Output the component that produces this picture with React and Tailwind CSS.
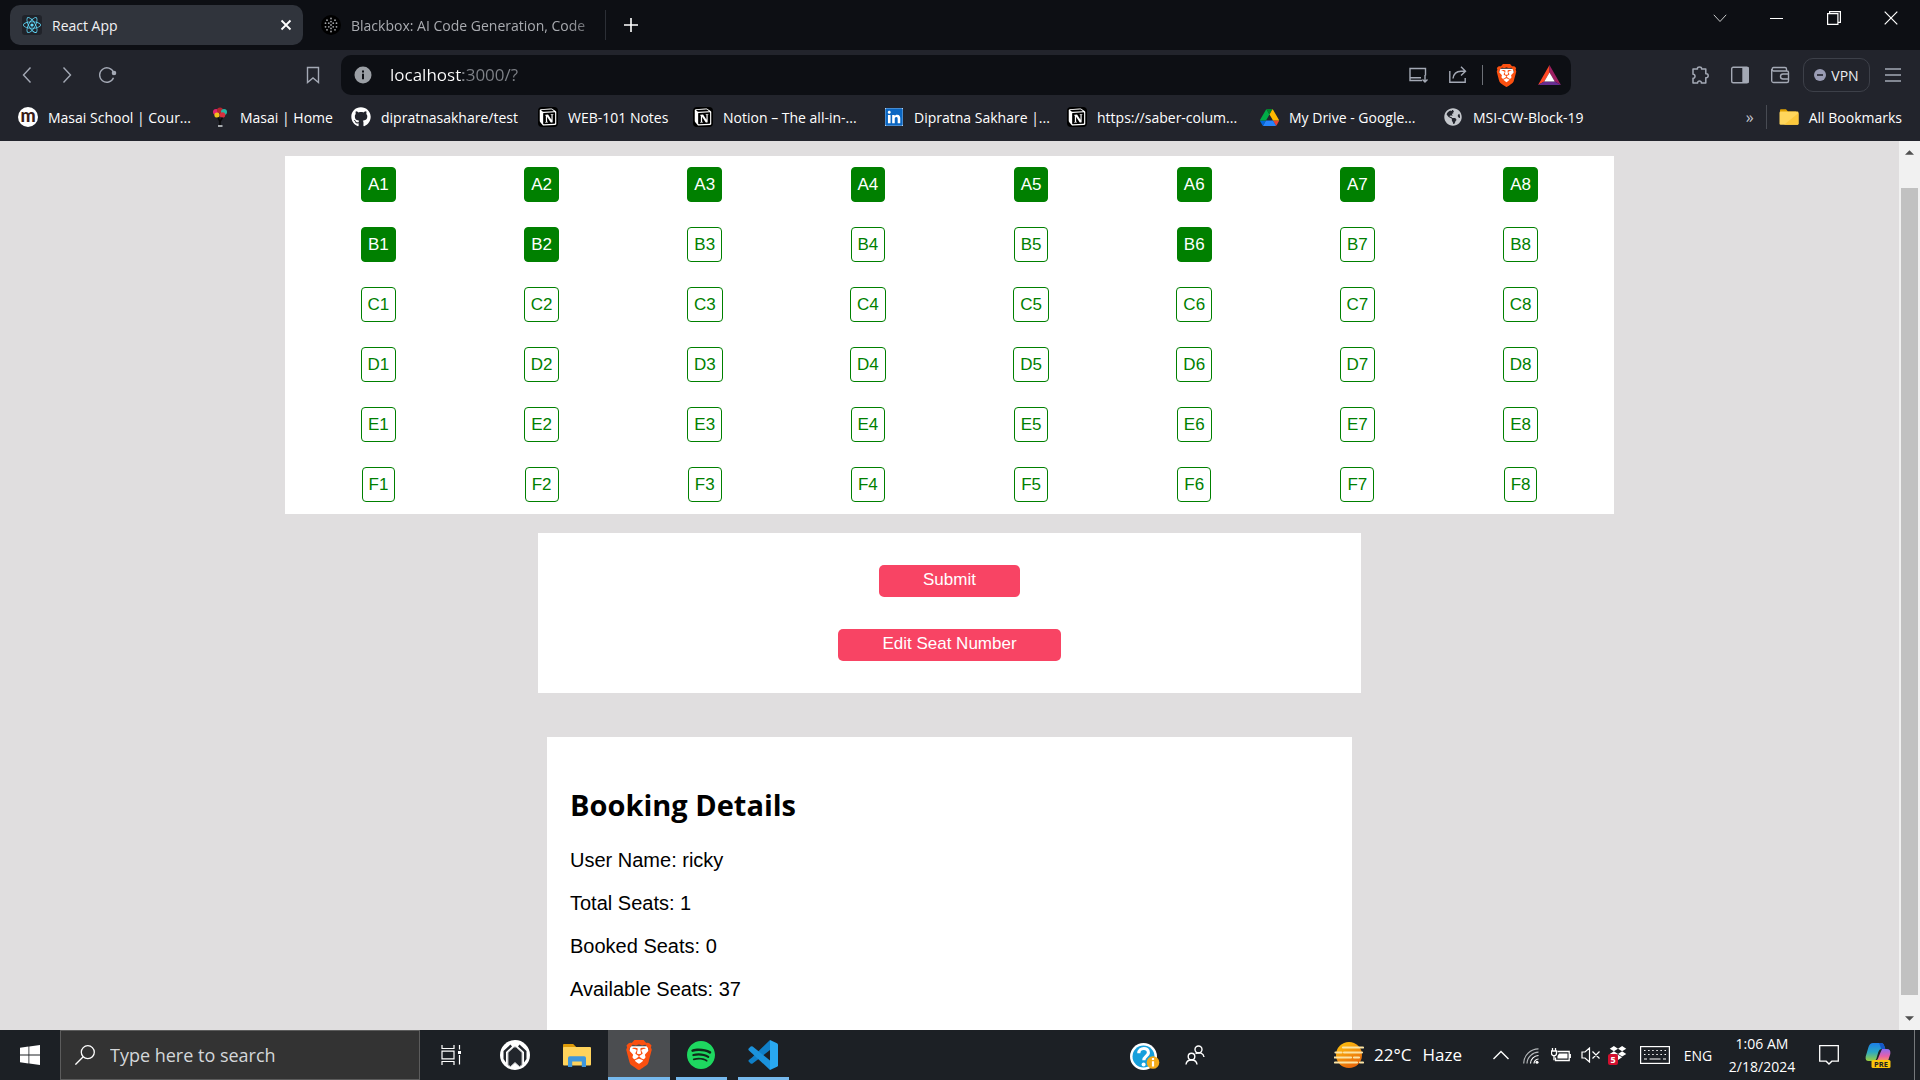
import React, { useState } from "react";
import { SiBrave, SiSpotify } from "react-icons/si";
import { FaGithub, FaLinkedin, FaDropbox, FaReact, FaGlobeAmericas } from "react-icons/fa";
import { RiNotionFill } from "react-icons/ri";

const ROWS = ["A", "B", "C", "D", "E", "F"];
const COLS = [1, 2, 3, 4, 5, 6, 7, 8];
const INITIAL_SELECTED = ["A1", "A2", "A3", "A4", "A5", "A6", "A7", "A8", "B1", "B2", "B6"];

function BraveLion({ className }) {
  return (
    <span className={`grid place-items-center ${className}`}>
      <svg viewBox="0 0 24 24" className="col-start-1 row-start-1 h-full w-full">
        <path d="M5 5h14l1 6-3 7-5 4-5-4-3-7z" fill="#fff" />
      </svg>
      <SiBrave className="col-start-1 row-start-1 h-full w-full text-[#fb5010]" />
    </span>
  );
}

function MasaiIcon() {
  return (
    <span className="flex h-5 w-5 items-center justify-center rounded-full bg-white pb-1 font-['Lato',sans-serif] text-[18px] font-black leading-none text-[#3a1d1a]">
      m
    </span>
  );
}

function BalloonIcon() {
  return (
    <svg viewBox="0 0 20 20" className="h-5 w-5">
      <circle cx="6" cy="5" r="3" fill="#e0246e" />
      <circle cx="10" cy="3.5" r="3" fill="#b3262e" />
      <circle cx="14" cy="5" r="3" fill="#26b8a5" />
      <circle cx="7" cy="8" r="2.6" fill="#f2c21b" />
      <circle cx="12.5" cy="8" r="2.8" fill="#d8303e" />
      <path d="M8 10.5l2 4 2.5-4M10 14v5" stroke="#0b0b0d" strokeWidth="1.6" fill="none" />
      <path d="M8 19h4.5" stroke="#c9ccd0" strokeWidth="1.6" />
    </svg>
  );
}

function NotionIcon() {
  return (
    <span className="flex h-5 w-5 items-center justify-center rounded-[4px] bg-black">
      <RiNotionFill className="h-[22px] w-[22px] shrink-0 text-white" />
    </span>
  );
}

function DriveIcon() {
  return (
    <svg viewBox="0 0 87.3 78" className="h-[17px] w-[19px]">
      <path d="m6.6 66.85 3.85 6.65c.8 1.4 1.95 2.5 3.3 3.3l13.75-23.8h-27.5c0 1.55.4 3.1 1.2 4.5z" fill="#0066da" />
      <path d="m43.65 25-13.75-23.8c-1.35.8-2.5 1.9-3.3 3.3l-25.4 44a9.06 9.06 0 0 0 -1.2 4.5h27.5z" fill="#00ac47" />
      <path d="m73.55 76.8c1.35-.8 2.5-1.9 3.3-3.3l1.6-2.75 7.65-13.25c.8-1.4 1.2-2.95 1.2-4.5h-27.502l5.852 11.5z" fill="#ea4335" />
      <path d="m43.65 25 13.75-23.8c-1.35-.8-2.9-1.2-4.5-1.2h-18.5c-1.6 0-3.15.45-4.5 1.2z" fill="#00832d" />
      <path d="m59.8 53h-32.3l-13.75 23.8c1.35.8 2.9 1.2 4.5 1.2h50.8c1.6 0 3.15-.45 4.5-1.2z" fill="#2684fc" />
      <path d="m73.4 26.5-12.7-22c-.8-1.4-1.95-2.5-3.3-3.3l-13.75 23.8 16.15 28h27.45c0-1.55-.4-3.1-1.2-4.5z" fill="#ffba00" />
    </svg>
  );
}

function BookmarkFolder() {
  return (
    <svg viewBox="0 0 20 16" className="h-4 w-5">
      <path d="M1 1.5C1 .7 1.5.3 2 .3h5L9 2.5h8v5H1z" fill="#e0a100" />
      <rect x="0.5" y="2.5" width="19" height="13.2" rx="1.2" fill="#ffd65c" />
      <path d="M19.5 4v10.500a1.200 1.200 0 0 1-1.200 1.200H5z" fill="#fcc83c" />
    </svg>
  );
}

const BOOKMARKS = [
  { icon: <MasaiIcon />, label: "Masai School | Cour..." },
  { icon: <BalloonIcon />, label: "Masai | Home" },
  { icon: <FaGithub className="h-5 w-5 text-white" />, label: "dipratnasakhare/test" },
  { icon: <NotionIcon />, label: "WEB-101 Notes" },
  { icon: <NotionIcon />, label: "Notion – The all-in-..." },
  {
    icon: (
      <span className="flex h-[18px] w-[18px] items-center justify-center bg-white">
        <FaLinkedin className="h-5 w-[18px] text-[#0a66c2]" />
      </span>
    ),
    label: "Dipratna Sakhare |...",
  },
  { icon: <NotionIcon />, label: "https://saber-colum..." },
  { icon: <DriveIcon />, label: "My Drive - Google..." },
  { icon: <FaGlobeAmericas className="h-[18px] w-[18px] text-[#c4c7cc]" />, label: "MSI-CW-Block-19" },
];

function TabStrip() {
  return (
    <div className="flex h-[50px] shrink-0 bg-[#0d0f14] text-[14px]">
      <div className="ml-[10px] mt-[5px] flex h-10 w-[293px] items-center rounded-[10px] bg-[#30343c] pl-3 pr-[7px] text-[#f0f1f3]">
        <span className="flex h-5 w-5 items-center justify-center rounded-[3px] bg-[#20232a]">
          <FaReact className="h-[18px] w-[18px] text-[#61dafb]" />
        </span>
        <span className="ml-[10px] flex-1">React App</span>
        <button aria-label="Close tab" className="flex h-5 w-5 items-center justify-center">
          <svg viewBox="0 0 12 12" className="h-3 w-3">
            <path d="M1.500 1.500l9 9M10.500 1.500l-9 9" stroke="#fff" strokeWidth="1.800" />
          </svg>
        </button>
      </div>
      <div className="ml-[18px] flex h-[50px] w-[284px] items-center text-[#a9abb0]">
        <svg viewBox="0 0 20 20" className="h-5 w-5 shrink-0">
          <circle cx="10" cy="10" r="10" fill="#000" />
          {[
            [10, 3.5], [6, 5.2], [14, 5.2], [10, 6.6], [4.5, 8.2], [7.8, 8.2], [12.2, 8.2], [15.5, 8.2],
            [10, 10], [4.5, 11.8], [7.8, 11.8], [12.2, 11.8], [15.5, 11.8], [10, 13.4], [6, 14.8], [14, 14.8], [10, 16.5],
          ].map(([x, y]) => (
            <circle key={`${x}-${y}`} cx={x} cy={y} r="0.9" fill="#a0a2a6" />
          ))}
        </svg>
        <span className="ml-[10px] whitespace-nowrap [mask-image:linear-gradient(to_right,#000_92%,rgba(0,0,0,0.6))]">
          Blackbox: AI Code Generation, Code
        </span>
      </div>
      <div className="my-[10px] w-px bg-[#2c2f36]" />
      <button aria-label="New tab" className="flex w-[50px] items-center justify-center">
        <svg viewBox="0 0 14 14" className="h-[14px] w-[14px]">
          <path d="M7 0v14M0 7h14" stroke="#fff" strokeWidth="1.600" />
        </svg>
      </button>
      <div className="ml-auto mr-px flex h-9">
        <button aria-label="Search tabs" className="flex w-[57px] items-center justify-center">
          <svg viewBox="0 0 14 14" className="h-[14px] w-[14px]">
            <path d="M.8 3.800L7 10.500l6.200-6.700" stroke="#c9cacc" fill="none" />
          </svg>
        </button>
        <button aria-label="Minimize" className="flex w-[57px] items-center justify-center">
          <span className="h-px w-[13px] bg-white" />
        </button>
        <button aria-label="Restore" className="flex w-[57px] items-center justify-center">
          <svg viewBox="0 0 14 14" className="h-[14px] w-[14px]">
            <path d="M.6 2.600h10.300v10.800H.6zM2.600 2.500V.6h10.800v10.800h-2" stroke="#fff" strokeWidth="1.200" fill="none" />
          </svg>
        </button>
        <button aria-label="Close" className="flex w-[57px] items-center justify-center">
          <svg viewBox="0 0 14 14" className="h-[14px] w-[14px]">
            <path d="M.7.7l12.600 12.600M13.300.7L.7 13.300" stroke="#fff" strokeWidth="1.200" />
          </svg>
        </button>
      </div>
    </div>
  );
}

function ToolButton({ label, children }) {
  return (
    <button aria-label={label} className="flex h-10 w-10 shrink-0 items-center justify-center">
      <svg viewBox="0 0 20 20" className="h-5 w-5" fill="none" stroke="#a4a9b5" strokeWidth="1.400">
        {children}
      </svg>
    </button>
  );
}

function Toolbar() {
  return (
    <div className="flex h-[50px] shrink-0 items-center bg-[#22242c]">
      <div className="flex w-[341px] items-center pl-[7px] pr-2">
        <ToolButton label="Back"><path d="M13.500 2.500L6.500 10l7 7.500" /></ToolButton>
        <ToolButton label="Forward"><path d="M6.500 2.500l7 7.500-7 7.500" /></ToolButton>
        <ToolButton label="Reload">
          <path d="M16.500 12.800A7.200 7.200 0 1 1 16.600 7.500" />
          <circle cx="17" cy="8" r="1.600" fill="#a4a9b5" />
        </ToolButton>
        <div className="ml-auto">
          <ToolButton label="Bookmark page"><path d="M4.500 2.500h11v15L10 13l-5.500 4.500z" /></ToolButton>
        </div>
      </div>
      <div className="flex h-10 flex-1 items-center rounded-[10px] bg-[#0d0f14] pl-[13px] pr-[2px]">
        <svg viewBox="0 0 18 18" className="h-[18px] w-[18px]">
          <circle cx="9" cy="9" r="8.500" fill="#9b9fa5" />
          <path d="M9 7.800v5.400M9 4.600v1.800" stroke="#0d0f14" strokeWidth="2" />
        </svg>
        <input
          type="text"
          aria-label="Address"
          defaultValue="localhost:3000/?"
          className="ml-[18px] w-0 flex-1 bg-[linear-gradient(to_right,#fff_73px,#7f8288_73px)] bg-clip-text text-[17px] text-transparent outline-none"
        />
        <ToolButton label="Install app">
          <path d="M14 15.500H2V3.500h15.500v7M2 12.800h11M17 10v7M14.500 14.500L17 17l2.500-2.500" />
        </ToolButton>
        <ToolButton label="Share">
          <path d="M1.800 6v11.200h15.400V13M5 13.500c.6-4.500 3.500-7.300 8-7.300h4M13 1.800l4.500 4.400-4.500 4.400" />
        </ToolButton>
        <div className="ml-1 h-5 w-px bg-[#6d7077]" />
        <button aria-label="Brave Shields" className="flex h-10 w-[46px] items-center justify-center">
          <BraveLion className="h-[23px] w-[23px]" />
        </button>
        <button aria-label="Brave Rewards" className="flex h-10 w-10 items-center justify-center">
          <svg viewBox="0 0 24 21" className="h-5 w-[23px]">
            <path d="M12 0L0 21l6.500-3.700L12 8z" fill="#ff4724" />
            <path d="M12 0l12 21-6.500-3.700L12 8z" fill="#9e1f63" />
            <path d="M0 21l6.500-3.700h11L24 21z" fill="#662d91" />
            <path d="M12 8l5.500 9.300h-11z" fill="#fff" />
          </svg>
        </button>
      </div>
      <div className="flex w-[349px] items-center justify-end pr-[7px]">
        <button aria-label="Extensions" className="flex h-10 w-10 items-center justify-center">
          <svg viewBox="0 0 20 20" className="h-5 w-5" fill="none" stroke="#a4a9b5" strokeWidth="1.500" strokeLinejoin="round">
            <path d="M3 4h4.500C6.800 1.200 12.200 1.200 11.500 4h4.300v4.700c3.200-.6 3.200 4.600 0 4V18h-4.500c.6-2.800-4.200-2.800-3.600 0H3v-4.800c2.700.6 2.700-4.500 0-4z" />
          </svg>
        </button>
        <ToolButton label="Sidebar">
          <rect x="1.700" y="2.300" width="16.600" height="15.400" rx="1.500" />
          <path d="M13 3h5v14h-5z" fill="#a4a9b5" />
        </ToolButton>
        <ToolButton label="Wallet">
          <path d="M16.500 6V4a1.500 1.500 0 0 0-1.500-1.500H3.500a1.800 1.800 0 0 0 0 3.500H17a1.500 1.500 0 0 1 1.500 1.500v8.500a1.500 1.500 0 0 1-1.500 1.500H3.500A1.800 1.800 0 0 1 1.700 16V4M18.500 9H13a2.500 2.500 0 0 0 0 5h5.500" />
        </ToolButton>
        <button className="mx-[3px] flex h-[34px] w-[67px] items-center justify-center gap-[5px] rounded-[10px] border border-[#3d4049] text-[14px] text-[#eceef2]">
          <svg viewBox="0 0 12 12" className="h-3 w-3">
            <circle cx="6" cy="6" r="6" fill="#9a9cb4" />
            <path d="M3 6h6" stroke="#22242c" strokeWidth="1.600" />
          </svg>
          VPN
        </button>
        <ToolButton label="Menu"><path d="M2 4h16M2 10h16M2 16h16" /></ToolButton>
      </div>
    </div>
  );
}

function BookmarkBar() {
  return (
    <nav aria-label="Bookmarks" className="flex h-[41px] shrink-0 items-center whitespace-nowrap bg-[#22242c] pb-[7px] pl-[18px] pr-[18px] text-[14px] text-white">
      <div className="grid grid-cols-[192px_141px_187px_155px_191px_183px_192px_184px_auto] items-center">
        {BOOKMARKS.map((b) => (
          <a key={b.label} href="#" className="flex items-center gap-[10px]">
            <span className="flex h-5 w-5 items-center justify-center">{b.icon}</span>
            {b.label}
          </a>
        ))}
      </div>
      <button aria-label="More bookmarks" className="ml-auto text-[16px] leading-5 text-[#c3c6cf]">»</button>
      <div className="mx-[12px] h-6 w-px bg-[#484b53]" />
      <button className="flex items-center gap-[10px]">
        <BookmarkFolder />
        All Bookmarks
      </button>
    </nav>
  );
}

function SeatGrid({ selected, onToggle }) {
  return (
    <section aria-label="Seats" className="w-[70%] bg-white px-3 pb-3 pt-[11px]">
      <div className="grid grid-cols-8 justify-items-center gap-y-[25px]">
        {ROWS.flatMap((r) =>
          COLS.map((c) => {
            const id = r + c;
            const on = selected.includes(id);
            return (
              <button
                key={id}
                aria-pressed={on}
                onClick={() => onToggle(id)}
                className={`h-[35px] rounded-[4px] border border-[#008000] px-[6px] text-[17px] ${
                  on ? "bg-[#008000] text-white" : "bg-white text-[#008000]"
                }`}
              >
                {id}
              </button>
            );
          })
        )}
      </div>
    </section>
  );
}

function BookingPage() {
  const [selected, setSelected] = useState(INITIAL_SELECTED);
  const toggle = (id) =>
    setSelected((s) => (s.includes(id) ? s.filter((x) => x !== id) : [...s, id]));
  const details = [
    ["User Name", "ricky"],
    ["Total Seats", "1"],
    ["Booked Seats", "0"],
    ["Available Seats", 48 - selected.length],
  ];
  const action = "h-8 rounded-[5px] bg-[#f84464] px-11 pb-[2px] text-[17px] text-white";
  return (
    <main className="flex min-w-0 flex-1 flex-col items-center overflow-hidden bg-[#e0dedf] pt-[15px] font-['Liberation_Sans',Arial,sans-serif]">
      <SeatGrid selected={selected} onToggle={toggle} />
      <section className="mt-[19px] flex w-[823px] max-w-full shrink-0 flex-col items-center gap-8 bg-white py-8">
        <button className={action}>Submit</button>
        <button className={action}>Edit Seat Number</button>
      </section>
      <section className="mt-11 w-[805px] max-w-full shrink-0 bg-white px-[23px] pb-10 pt-[38px] text-black">
        <h2 className="mb-1 font-['Open_Sans',sans-serif] text-[29px] font-bold leading-[60px]">Booking Details</h2>
        {details.map(([k, v]) => (
          <p key={k} className="text-[20px] leading-[43px]">{k}: {v}</p>
        ))}
      </section>
    </main>
  );
}

function Scrollbar() {
  return (
    <div className="flex w-[21px] shrink-0 flex-col bg-[#f1f1f1]">
      <button aria-label="Scroll up" className="flex h-[22px] items-center justify-center">
        <svg viewBox="0 0 10 5" className="h-[5px] w-[9px]"><path d="M0 5l5-5 5 5z" fill="#505050" /></svg>
      </button>
      <div className="mx-[2px] mb-[12px] mt-[25px] flex-1 bg-[#c1c1c1]" />
      <button aria-label="Scroll down" className="flex h-[23px] items-center justify-center">
        <svg viewBox="0 0 10 5" className="h-[5px] w-[9px]"><path d="M0 0l5 5 5-5z" fill="#505050" /></svg>
      </button>
    </div>
  );
}

function AppButton({ label, state, children }) {
  return (
    <button
      aria-label={label}
      className={`flex h-[50px] w-[62px] flex-col items-center ${state === "active" ? "bg-[#4b4d50]" : ""}`}
    >
      <span className="flex h-[47px] items-center pt-[3px]">{children}</span>
      {state === "active" && <span className="h-[3px] w-full bg-[#76b9ed]" />}
      {state === "open" && <span className="h-[3px] w-[51px] bg-[#76b9ed]" />}
    </button>
  );
}

function TrayButton({ label, className, children }) {
  return (
    <button aria-label={label} className={`flex h-[50px] shrink-0 items-center justify-center ${className}`}>
      {children}
    </button>
  );
}

function Taskbar() {
  return (
    <footer className="flex h-[50px] shrink-0 bg-[#1c2025] text-white">
      <TrayButton label="Start" className="w-[60px]">
        <svg viewBox="0 0 20 20" className="h-5 w-5" fill="#fff">
          <path d="M0 2.800L8.500 1.600v8H0zM9.300 1.500L20 0v9.600H9.300zM0 10.400h8.500v8L0 17.200zM9.300 10.400H20V20L9.300 18.500z" />
        </svg>
      </TrayButton>
      <label className="flex w-[360px] items-center border border-[#5c5c5c] bg-[#333] pl-[14px]">
        <svg viewBox="0 0 20 20" className="h-5 w-5" fill="none" stroke="#fff" strokeWidth="1.300">
          <circle cx="12.800" cy="7.200" r="6.500" />
          <path d="M8.200 11.800L.4 19.600" />
        </svg>
        <input
          type="text"
          aria-label="Search"
          placeholder="Type here to search"
          className="ml-[15px] w-0 flex-1 bg-transparent text-[18px] outline-none placeholder:text-[#d4d7da]"
        />
      </label>
      <TrayButton label="Task view" className="w-16">
        <svg viewBox="0 0 22 20" className="h-5 w-[22px]" fill="none" stroke="#fff" strokeWidth="1.200">
          <path d="M1 0v3.500h12V0M1 20v-3.500h12V20M1 6.200h12v7.600H1zM18.500 0v4.500M18.500 10v9.500" />
          <path d="M17 6h3v3h-3z" fill="#fff" stroke="none" />
        </svg>
      </TrayButton>
      <AppButton label="Launcher">
        <svg viewBox="0 0 30 30" className="h-[30px] w-[30px]">
          <circle cx="15" cy="15" r="15" fill="#fff" />
          <path d="M10.500 4.500L3.500 11v8l2.500 3.500V12l6-5.500zM19.500 4.500l7 6.500v8L24 22.500V12l-6-5.500z" fill="#22262c" />
          <path d="M8 25V12.500L14 7h2l6 5.500V25l-2.500 1.500-4.500-4-4.500 4z" fill="#22262c" stroke="#b5b7ba" />
        </svg>
      </AppButton>
      <AppButton label="File Explorer">
        <svg viewBox="0 0 28 23" className="h-[23px] w-7">
          <path d="M0 1.200C0 .5.500 0 1.200 0h9l3 3v4H0z" fill="#dd9a08" />
          <rect x="0" y="3" width="28" height="18.500" rx="1" fill="#ffd35c" />
          <path d="M5 23V14a1.800 1.800 0 0 1 1.800-1.800h14.400A1.800 1.800 0 0 1 23 14v9h-4.200v-5.500h-9.600V23z" fill="#3f97dc" />
        </svg>
      </AppButton>
      <AppButton label="Brave" state="active"><BraveLion className="h-[30px] w-[30px]" /></AppButton>
      <AppButton label="Spotify" state="open">
        <span className="flex h-7 w-7 rounded-full bg-[#10291a]">
          <SiSpotify className="h-7 w-7 text-[#1ed760]" />
        </span>
      </AppButton>
      <AppButton label="Visual Studio Code" state="open">
        <svg viewBox="0 0 30 30" className="h-[30px] w-[30px]">
          <path d="M22 0l-18 17.500-3.500 2.800L.6 21.500l2 2q1 .6 2 0L22 10z" fill="#0f7fc8" />
          <path d="M22 30L.7 10.300q-.6-1 0-1.700l2-2q1-.6 2 0L22 20.500z" fill="#1b93dd" />
          <path d="M22 0l7 3.200q1 .6 1 1.600v20.400q0 1-1 1.600L22 30z" fill="#29a8f0" />
        </svg>
      </AppButton>

      <TrayButton label="Help" className="ml-auto w-[50px]">
        <svg viewBox="0 0 30 28" className="mt-1 h-7 w-[30px]">
          <circle cx="13.500" cy="13.500" r="13.500" fill="#fff" />
          <circle cx="13.500" cy="13.500" r="11" fill="#169fdb" />
          <path d="M8.800 10.300c0-6.300 10-6.300 9.600-.5-.2 3.200-4.600 3.600-4.600 7.400" stroke="#fff" strokeWidth="3.200" fill="none" />
          <circle cx="13.600" cy="21.400" r="2" fill="#fff" />
          <circle cx="23" cy="19.500" r="6.300" fill="#f3ab1a" />
          <path d="M23 18.300v5.200M23 15v2" stroke="#fff" strokeWidth="2.200" />
        </svg>
      </TrayButton>
      <TrayButton label="People" className="w-[50px]">
        <svg viewBox="0 0 20 20" className="h-5 w-5" fill="none" stroke="#fff" strokeWidth="1.400">
          <circle cx="13.500" cy="4.500" r="3.500" />
          <circle cx="6.500" cy="11.500" r="3.300" />
          <path d="M1 19.500c.5-6 10.500-6 11 0M10.500 8.500c4-1.500 8-.5 8.500 3.500" />
        </svg>
      </TrayButton>
      <button className="ml-[114px] flex w-[152px] shrink-0 items-center whitespace-pre text-[17px]">
        <svg viewBox="0 0 30 26" className="mr-[10px] h-[26px] w-[30px]">
          <defs>
            <linearGradient id="sun" x1="0" y1="0" x2="0.500" y2="1">
              <stop offset="0" stopColor="#ffc70f" />
              <stop offset="1" stopColor="#e8690b" />
            </linearGradient>
          </defs>
          <circle cx="15" cy="13" r="13" fill="url(#sun)" />
          <path d="M9 5.500h20M1.500 10.500h6M10 10.500h18M0 15.500h17M20 15.500h5M1 20.500h22M26 20.500h3" stroke="#fbe3a4" strokeWidth="2.200" strokeLinecap="round" />
        </svg>
        <span className="mr-[11px]">22°C</span>
        <span>Haze</span>
      </button>
      <TrayButton label="Show hidden icons" className="w-[30px]">
        <svg viewBox="0 0 16 10" className="h-[10px] w-4" fill="none" stroke="#fff" strokeWidth="1.400">
          <path d="M.5 9L8 1.500 15.500 9" />
        </svg>
      </TrayButton>
      <TrayButton label="Network" className="w-[30px]">
        <svg viewBox="0 0 16 16" className="mt-[2px] h-4 w-4" fill="none" strokeWidth="1.200">
          <path d="M.7 15.500C.7 7.500 7.500.8 15.500.8M4 15.500C4 9.500 9.500 4.200 15.500 4.200" stroke="#b5b8bb" />
          <path d="M7.500 15.500c0-4.200 3.800-8 8-8M11 15.500c0-2.300 2-4.500 4.500-4.500" stroke="#fff" />
          <circle cx="14" cy="14.200" r="1.500" fill="#fff" />
        </svg>
      </TrayButton>
      <TrayButton label="Battery charging" className="w-[30px]">
        <svg viewBox="0 0 20 14" className="h-[14px] w-5" fill="none" stroke="#fff" strokeWidth="1.300">
          <path d="M6.500 3.500h11.700v9H4.500V9.500M19.300 6v4" />
          <path d="M8 5.500h8.500v5H6.500V8z" fill="#fff" stroke="none" />
          <path d="M1.500 0v2.500M4.500 0v2.500M.5 3h5v2.200a2.500 2.500 0 0 1-5 0zM3 7.500v4.800" />
        </svg>
      </TrayButton>
      <TrayButton label="Volume muted" className="w-[30px]">
        <svg viewBox="0 0 20 16" className="h-4 w-5" fill="none" stroke="#fff" strokeWidth="1.200">
          <path d="M1 5h3l4.500-4v14L4 11H1zM11.500 4.500l7 7M18.500 4.500l-7 7" />
        </svg>
      </TrayButton>
      <TrayButton label="Dropbox" className="w-6">
        <span className="relative h-5 w-5">
          <FaDropbox className="h-4 w-5 text-white" />
          <span className="absolute bottom-0 left-0 flex h-[11px] w-[10px] items-center justify-center rounded-[2px] bg-[#d2102f] text-[9px] font-bold leading-none">5</span>
        </span>
      </TrayButton>
      <TrayButton label="Touch keyboard" className="w-[50px]">
        <svg viewBox="0 0 30 18" className="h-[18px] w-[30px]" fill="none" stroke="#fff" strokeWidth="1.200">
          <rect x=".6" y=".6" width="28.800" height="16.800" />
          <path d="M4 4.500h22M4 8.500h22" strokeDasharray="1.500 2.600" />
          <path d="M4 13h3M9.500 13h11M23 13h3" />
        </svg>
      </TrayButton>
      <TrayButton label="Input language" className="w-9 text-[14px]">ENG</TrayButton>
      <button className="w-[92px] text-center text-[14px] leading-[23px]">
        <span className="block">1:06 AM</span>
        <span className="block">2/18/2024</span>
      </button>
      <TrayButton label="Notifications" className="w-[42px]">
        <svg viewBox="0 0 20 20" className="h-5 w-5" fill="none" stroke="#fff" strokeWidth="1.300">
          <path d="M.7.7h18.600v15.500h-6.500L10 19l-2.800-2.800H.7z" />
        </svg>
      </TrayButton>
      <TrayButton label="Copilot" className="w-14">
        <svg viewBox="0 0 26 25" className="h-[25px] w-[26px]">
          <defs>
            <linearGradient id="cpl" x1="0" y1="0" x2="0" y2="1">
              <stop offset="0" stopColor="#1c7fe8" />
              <stop offset="0.500" stopColor="#2ba8c4" />
              <stop offset="1" stopColor="#9bd03c" />
            </linearGradient>
            <linearGradient id="cpr" x1="0" y1="0" x2="0" y2="1">
              <stop offset="0" stopColor="#8c6cf2" />
              <stop offset="0.600" stopColor="#e85fa8" />
              <stop offset="1" stopColor="#f79a5b" />
            </linearGradient>
          </defs>
          <path d="M8 0h8q2.500 0 3.300 3l1 3h-4q-2 0-3 3l-2 7q-.8 2-3 2H3.500Q0 18 .7 13.500L3.500 4Q4.800 0 8 0z" fill="url(#cpl)" />
          <path d="M17 6h5q4 0 3.300 5L23 18H11q2-1 3-5z" fill="url(#cpr)" />
          <path d="M14 0h2q2.500 0 3.300 3l1 3h-4z" fill="#1557c7" />
          <rect x="6.500" y="17" width="19" height="8" rx="1.500" fill="#fbc40c" />
          <text x="16" y="23.800" textAnchor="middle" fontSize="7.500" fontWeight="700" fill="#1c2025">PRE</text>
        </svg>
      </TrayButton>
      <button aria-label="Show desktop" className="ml-2 w-[6px] border-l border-[#75787b]" />
    </footer>
  );
}

export default function App() {
  return (
    <div className="flex h-screen flex-col overflow-hidden font-['Open_Sans',sans-serif]">
      <TabStrip />
      <Toolbar />
      <BookmarkBar />
      <div className="flex min-h-0 flex-1">
        <BookingPage />
        <Scrollbar />
      </div>
      <Taskbar />
    </div>
  );
}
